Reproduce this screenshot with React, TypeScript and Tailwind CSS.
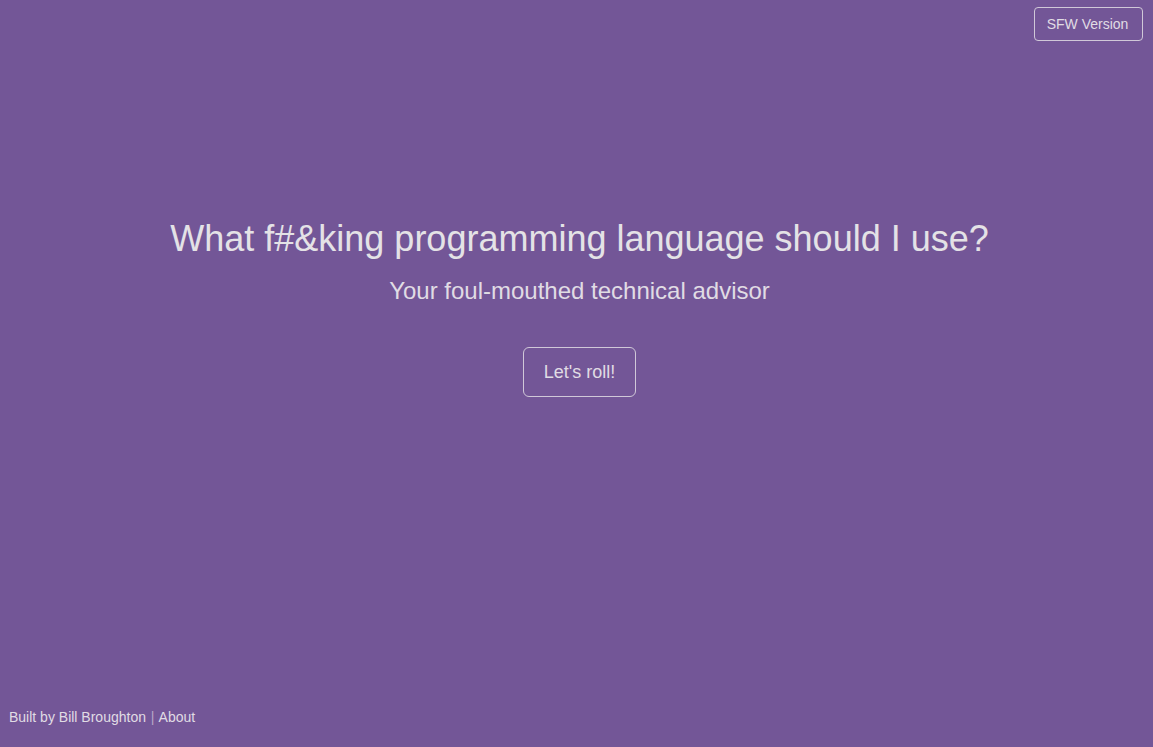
import React from "react";

export default function App() {
  return (
    <div
      className="flex h-[747px] w-full flex-col bg-[#735697] text-[#dcdcdc]"
      style={{ fontFamily: '"Liberation Sans", Arial, sans-serif' }}
    >
      <div className="flex justify-end pr-[10px] pt-[7px]">
        <button className="flex h-[34px] w-[109px] items-center justify-center rounded-[4px] border border-[#d0c8d8] pr-[2px] text-[14px] text-[#e0dce4]">
          SFW Version
        </button>
      </div>
      <main className="mt-[178px] flex flex-col items-center pl-[6px]">
        <h1 className="text-[36px] leading-[40px] text-[#e4e2e6]">
          What f#&amp;king programming language should I use?
        </h1>
        <p className="mt-[17px] text-[24px] leading-[30px] text-[#e0dce4]">
          Your foul-mouthed technical advisor
        </p>
        <button className="mt-[41px] flex h-[50px] w-[113px] items-center justify-center rounded-[6px] border border-[#d0c8d8] text-[18px] text-[#e0dce4]">
          Let's roll!
        </button>
      </main>
      <footer className="mt-auto pb-[20px] pl-[9px] text-[14px] leading-[20px] text-[#e0dce4]">
        Built by Bill Broughton <span className="mx-[1px] text-[#b8a8c8]">|</span> About
      </footer>
    </div>
  );
}
